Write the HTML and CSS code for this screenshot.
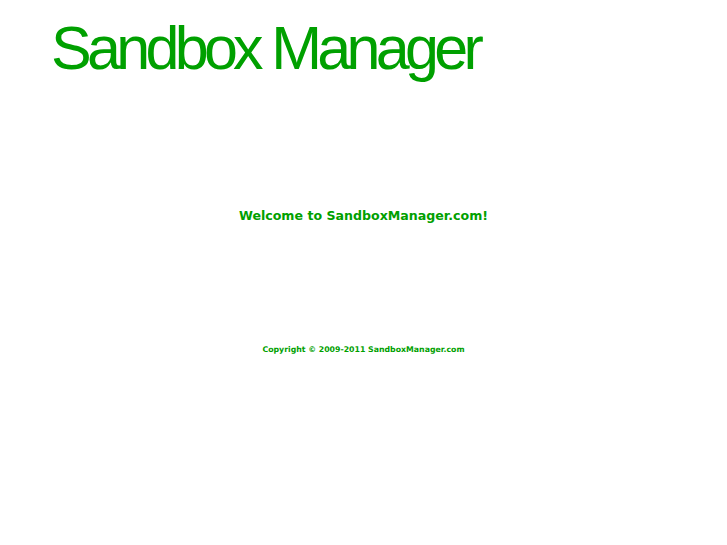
FILE: index.html
```html
<!DOCTYPE html>
<html>
<head>
<meta charset="utf-8">
<link rel="stylesheet" href="styles.css">
</head>
<body>
<div class="header">
  <div class="logo">Sandbox Manager</div>
</div>
<div class="welcome">Welcome to SandboxManager.com!</div>
<div class="footer">Copyright © 2009-2011 SandboxManager.com</div>
</body>
</html>
```
FILE: styles.css
```css
html, body {
  margin: 0;
  padding: 0;
  background: #ffffff;
}
body {
  font-family: "DejaVu Sans", sans-serif;
  color: #00a000;
}
.header {
  padding: 13px 0 0 51px;
  height: 91px;
}
.logo {
  font-family: "Liberation Sans", Arial, sans-serif;
  font-size: 61px;
  line-height: 70px;
  letter-spacing: -4.7px;
  color: #00a000;
}
.welcome {
  text-align: center;
  font-weight: bold;
  font-size: 12.6px;
  line-height: 16px;
  margin-top: 104px;
}
.footer {
  text-align: center;
  font-weight: bold;
  font-size: 7.8px;
  line-height: 12px;
  margin-top: 120px;
}
```
